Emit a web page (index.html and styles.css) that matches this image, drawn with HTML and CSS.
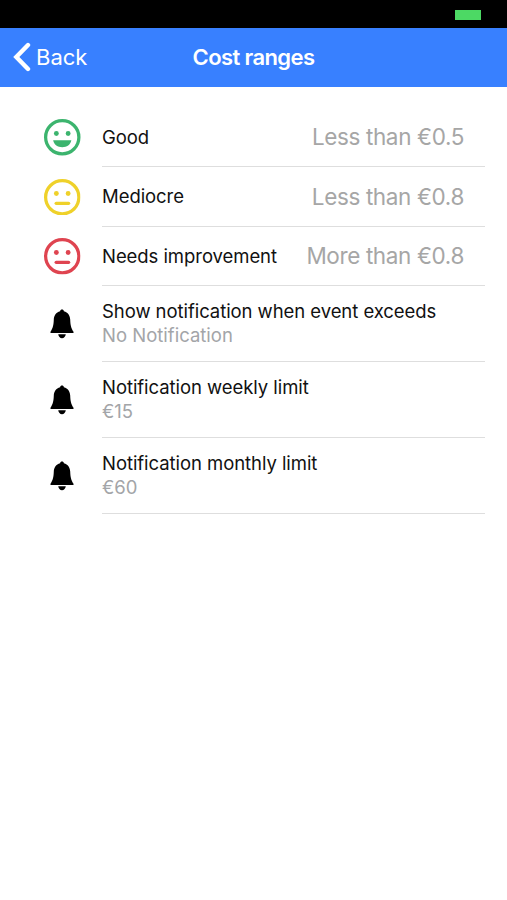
FILE: index.html
```html
<!DOCTYPE html>
<html lang="en">
<head>
<meta charset="utf-8">
<title>Cost ranges</title>
<link rel="stylesheet" href="styles.css">
</head>
<body>
<svg width="0" height="0" class="defs">
  <symbol id="neutral" viewBox="0 0 36 36">
    <circle cx="18" cy="18" r="16.4" fill="none" stroke="currentColor" stroke-width="3.2"/>
    <circle cx="12.2" cy="14.3" r="2.4" fill="currentColor"/>
    <circle cx="23.8" cy="14.3" r="2.4" fill="currentColor"/>
    <path d="M12 24H24.3" stroke="currentColor" stroke-width="3.2" stroke-linecap="round"/>
  </symbol>
  <symbol id="bell" viewBox="0 0 24 30">
    <path d="M12 .5c1 0 1.800.7 1.900 1.700C18 3.200 20 6.600 20.200 10.500C20.400 16 21 19 23.500 22.800V24H.5V22.800C3 19 3.600 16 3.800 10.500C4 6.600 6 3.200 10.100 2.200C10.200 1.200 11 .5 12 .5ZM8.200 25.300H15.800C15.500 27.700 14 29.200 12 29.200S8.500 27.700 8.200 25.300Z"/>
  </symbol>
</svg>
<div class="status"><span class="battery"></span></div>
<header class="nav">
  <a class="back">
    <svg class="chevron" viewBox="0 0 18 30"><path d="M15 3L3.300 15L15 27" fill="none" stroke="currentColor" stroke-width="4.400" stroke-linecap="round"/></svg>
    <span>Back</span>
  </a>
  <h1>Cost ranges</h1>
</header>
<main class="list">
  <div class="row">
    <svg class="face good" viewBox="0 0 36 36">
      <circle cx="18" cy="18" r="16.4" fill="none" stroke="currentColor" stroke-width="3.2"/>
      <circle cx="12.2" cy="14.3" r="2.4" fill="currentColor"/>
      <circle cx="23.8" cy="14.3" r="2.4" fill="currentColor"/>
      <path d="M9 21H27C26.100 25.300 22.500 27.900 18 27.900S9.900 25.300 9 21Z" fill="currentColor"/>
    </svg>
    <div class="cell"><span class="label">Good</span><span class="value">Less than €0.5</span></div>
  </div>
  <div class="row">
    <svg class="face mediocre"><use href="#neutral"/></svg>
    <div class="cell"><span class="label">Mediocre</span><span class="value">Less than €0.8</span></div>
  </div>
  <div class="row">
    <svg class="face poor"><use href="#neutral"/></svg>
    <div class="cell"><span class="label">Needs improvement</span><span class="value">More than €0.8</span></div>
  </div>
  <div class="row tall">
    <svg class="bell"><use href="#bell"/></svg>
    <div class="cell"><span class="label">Show notification when event exceeds</span><span class="detail">No Notification</span></div>
  </div>
  <div class="row tall">
    <svg class="bell"><use href="#bell"/></svg>
    <div class="cell"><span class="label">Notification weekly limit</span><span class="detail">€15</span></div>
  </div>
  <div class="row tall">
    <svg class="bell"><use href="#bell"/></svg>
    <div class="cell"><span class="label">Notification monthly limit</span><span class="detail">€60</span></div>
  </div>
</main>
</body>
</html>
```
FILE: styles.css
```css
* { box-sizing: border-box; }
body {
  margin: 0;
  background: #fff;
  color: #111;
  font-family: Inter, "Liberation Sans", sans-serif;
}
.defs { display: none; }
.status {
  display: flex;
  justify-content: flex-end;
  height: 28px;
  padding: 10px 26px 0 0;
  background: #000;
}
.battery { width: 26px; height: 10px; background: #4cd964; }
.nav {
  display: grid;
  grid-template-columns: 1fr auto 1fr;
  align-items: center;
  height: 59px;
  padding-bottom: 1px;
  background: #3880ff;
  color: #fff;
}
.back {
  display: flex;
  align-items: center;
  gap: 5px;
  padding-left: 13px;
  font-size: 22px;
}
.chevron { width: 18px; height: 30px; }
h1 {
  margin: 0;
  font-size: 22px;
  line-height: 28px;
  font-weight: 600;
  letter-spacing: -0.6px;
}
.list { padding: 20.5px 22px 0 44px; }
.row { display: flex; align-items: center; height: 59.5px; }
.tall { height: 76px; }
.face { flex: none; width: 36.5px; height: 36.5px; }
.good { color: #3cb46e; }
.mediocre { color: #efd12a; }
.poor { color: #df4450; }
.bell { flex: none; width: 24px; height: 30px; margin: 0 6.5px 0 6px; fill: #000; }
.cell {
  display: flex;
  flex: 1;
  align-items: center;
  justify-content: space-between;
  height: 100%;
  margin-left: 21.5px;
  padding-right: 21px;
  border-bottom: 1px solid #dedede;
}
.tall .cell {
  flex-direction: column;
  align-items: flex-start;
  justify-content: center;
  padding-bottom: 1px;
}
.label { font-size: 18.5px; line-height: 24px; letter-spacing: -0.06px; white-space: nowrap; }
.value {
  padding-top: 1px;
  font-size: 22.5px;
  line-height: 28px;
  letter-spacing: -0.37px;
  color: #a6a6a6;
  white-space: nowrap;
}
.detail { font-size: 18.5px; line-height: 24px; color: #a3a5a8; }
```
